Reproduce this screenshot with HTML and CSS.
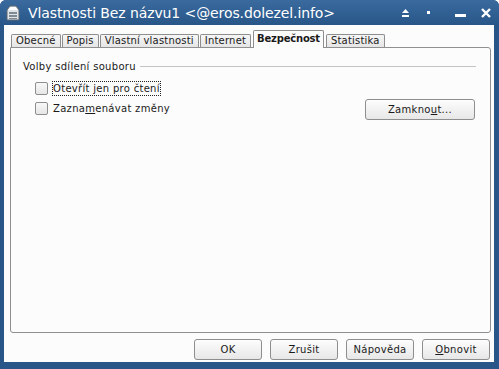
FILE: index.html
```html
<!DOCTYPE html>
<html lang="cs">
<head>
    <meta charset="UTF-8">
    <title>Vlastnosti Bez názvu1</title>
    <link rel="stylesheet" href="styles.css">
</head>
<body>
    <div class="window">
        <div class="titlebar">
            <svg class="app-icon" width="16" height="17" viewBox="0 0 16 17">
                <path d="M2 6 L5 2 L11 2 L14 6 L14 16 L2 16 Z" fill="#dfe4e8" stroke="#5d6770" stroke-width="1"/>
                <path d="M3 6 L5.5 3 L10.5 3 L13 6 Z" fill="#ffffff"/>
                <rect x="4" y="8" width="8" height="2" fill="#7f8a93"/>
                <rect x="4" y="11" width="8" height="2" fill="#7f8a93"/>
                <rect x="4" y="14" width="8" height="1" fill="#7f8a93"/>
            </svg>
            <span class="title">Vlastnosti Bez názvu1 &lt;@eros.dolezel.info&gt;</span>
            <div class="title-buttons">
                <svg width="9" height="8" viewBox="0 0 9 8"><path d="M4.5 0 L8 4 L1 4 Z" fill="#fff"/><rect x="1" y="6" width="7" height="2" fill="#fff"/></svg>
                <svg class="dot" width="4" height="4" viewBox="0 0 4 4"><rect width="3" height="3" fill="#fff"/></svg>
                <svg class="min" width="11" height="3" viewBox="0 0 11 3"><rect width="11" height="3" fill="#fff"/></svg>
                <svg class="close" width="10" height="10" viewBox="0 0 10 10"><path d="M1 1 L9 9 M9 1 L1 9" stroke="#fff" stroke-width="2.4"/></svg>
            </div>
        </div>
        <div class="client">
            <div class="tabs">
                <div class="tab">Obecné</div>
                <div class="tab">Popis</div>
                <div class="tab">Vlastní vlastnosti</div>
                <div class="tab">Internet</div>
                <div class="tab active">Bezpečnost</div>
                <div class="tab">Statistika</div>
            </div>
            <div class="panel">
                <div class="group-title">
                    <span>Volby sdílení souboru</span>
                    <div class="rule"></div>
                </div>
                <div class="option">
                    <span class="checkbox"></span>
                    <span class="label focused">Otevřít jen pro čtení</span>
                </div>
                <div class="option">
                    <span class="checkbox"></span>
                    <span class="label">Zazna<u>m</u>enávat změny</span>
                    <button class="btn lock">Zamkno<u>u</u>t...</button>
                </div>
            </div>
            <div class="actions">
                <button class="btn">OK</button>
                <button class="btn">Zrušit</button>
                <button class="btn">Nápověda</button>
                <button class="btn"><u>O</u>bnovit</button>
            </div>
        </div>
    </div>
</body>
</html>
```

FILE: styles.css
```css
body {
    margin: 0;
    padding: 0;
    background-color: #fff;
    font-family: "DejaVu Sans", "Liberation Sans", sans-serif;
    font-size: 10px;
    color: #1a1a1a;
}
.window {
    width: 499px;
    height: 369px;
    background-color: #285689;
    border-radius: 6px 6px 0 0;
    overflow: hidden;
    display: flex;
    flex-direction: column;
}
.titlebar {
    height: 25px;
    display: flex;
    align-items: center;
    padding-left: 5px;
    color: #fff;
    background: linear-gradient(#3a6a9e, #285689);
}
.app-icon {
    margin-right: 7px;
}
.title {
    font-size: 14px;
    letter-spacing: -0.1px;
}
.title-buttons {
    margin-left: auto;
    display: flex;
    align-items: center;
    margin-right: 8px;
}
.title-buttons svg {
    margin-left: 16px;
}
.title-buttons .dot {
    margin-left: 17px;
}
.title-buttons .min {
    margin-left: 24px;
    margin-top: 6px;
}
.title-buttons .close {
    margin-left: 15px;
}
.client {
    flex: 1;
    background-color: #fcfcfc;
    margin: 0 5px 7px 4px;
    padding: 6px 0 0 6px;
    display: flex;
    flex-direction: column;
}
.tabs {
    display: flex;
    align-items: flex-end;
    gap: 1px;
    margin-left: 1px;
    height: 17px;
}
.tab {
    height: 13px;
    line-height: 12px;
    padding: 0 4px;
    border: 1px solid #8e8e8e;
    border-bottom: none;
    border-radius: 2px 2px 0 0;
    background: linear-gradient(#f6f6f6, #e4e4e4);
    letter-spacing: 0.2px;
}
.tab.active {
    height: 17px;
    line-height: 16px;
    padding: 0 3px;
    font-weight: bold;
    background: #fcfcfc;
    margin: 0 1px;
    position: relative;
    z-index: 1;
    letter-spacing: -0.2px;
}
.panel {
    border: 1px solid #8f8f8f;
    border-radius: 0 3px 3px 3px;
    margin-top: -1px;
    padding: 13px 0 0 12px;
    box-sizing: border-box;
    width: 481px;
    height: 286px;
}
.group-title {
    display: flex;
    align-items: center;
    margin-right: 14px;
    letter-spacing: 0.3px;
}
.rule {
    flex: 1;
    height: 1px;
    background-color: #c4c4c4;
    margin-left: 4px;
}
.option {
    display: flex;
    align-items: center;
    height: 20px;
    padding-left: 12px;
    margin-top: 6px;
    letter-spacing: 0.3px;
}
.option + .option {
    margin-top: 0;
}
.checkbox {
    width: 11px;
    height: 11px;
    border: 1px solid #8e8e8e;
    border-radius: 2px;
    background: linear-gradient(#f8f8f8, #e6e6e6);
    margin-right: 4px;
}
.label {
    padding: 1px 0;
    border: 1px dotted transparent;
}
.label.focused {
    border-color: #222;
}
.btn {
    font-family: "DejaVu Sans", "Liberation Sans", sans-serif;
    font-size: 10px;
    color: #1a1a1a;
    height: 21px;
    padding: 0;
    border: 1px solid #8e8e8e;
    border-radius: 3px;
    background: linear-gradient(#fdfdfd, #e7e7e7);
    letter-spacing: 0.3px;
}
.lock {
    width: 110px;
    margin-left: auto;
    margin-right: 15px;
    margin-top: 3px;
}
.actions {
    display: flex;
    justify-content: flex-end;
    gap: 8px;
    margin-top: 6px;
    margin-right: 4px;
}
.actions .btn {
    width: 68px;
}
```
